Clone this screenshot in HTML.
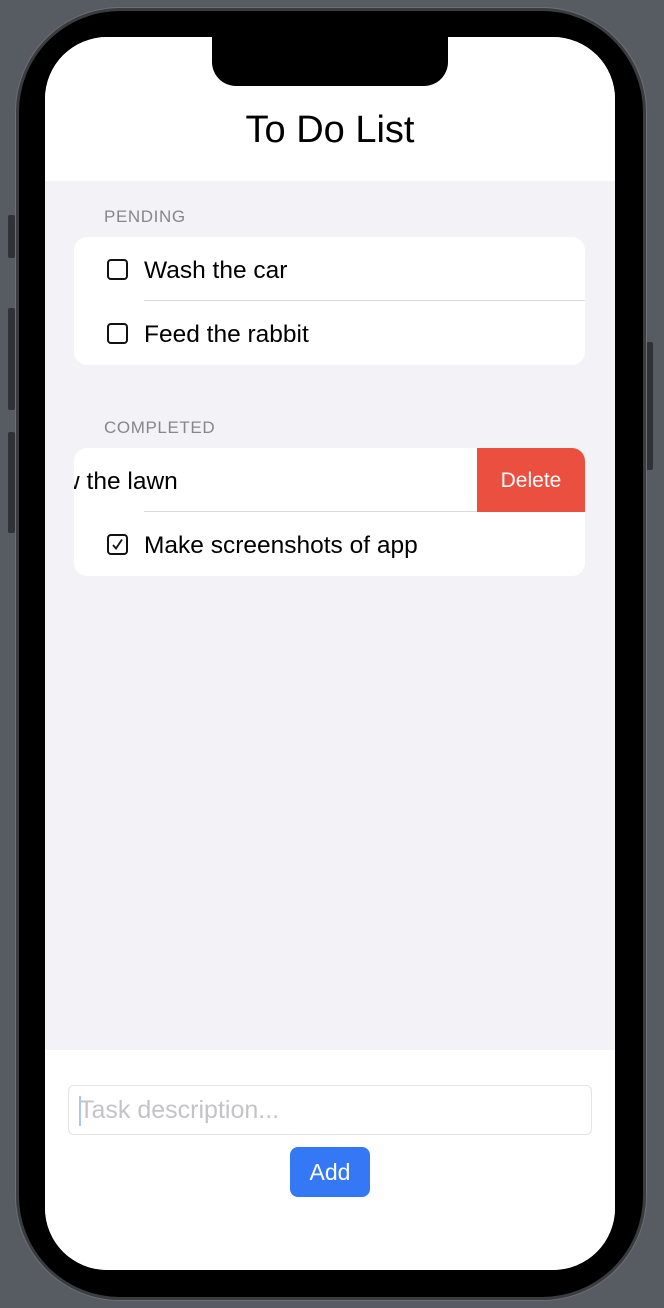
<!DOCTYPE html>
<html><head><meta charset="utf-8"><style>
*{margin:0;padding:0;box-sizing:border-box}
body{width:664px;height:1308px;background:#575c63;position:relative;overflow:hidden;font-family:"Liberation Sans",sans-serif}
.btn{position:absolute;background:#2f3236;border-radius:2px}
.phone{position:absolute;left:16px;top:8px;width:630px;height:1292px;border-radius:104px;background:#000;border:3px solid #3a3c40;box-shadow:0 0 0 1px #6c6f74}
.screen{position:absolute;left:45px;top:37px;width:570px;height:1233px;border-radius:62px;background:#f2f2f7;overflow:hidden}
.notch{position:absolute;left:167px;top:0;width:236px;height:49px;background:#000;border-radius:0 0 24px 24px}
.top{position:absolute;left:0;top:0;width:570px;height:144px;background:#fff}
.title{position:absolute;top:72px;width:570px;text-align:center;font-size:38px;color:#000}
.hdr{position:absolute;left:59px;font-size:17px;color:#86868b;letter-spacing:.6px}
.card{position:absolute;left:29px;width:511px;background:#fff;border-radius:13px;overflow:hidden}
.row{position:absolute;left:0;height:64px;width:511px;font-size:24.5px;color:#000;line-height:67px}
.row .t{position:absolute;left:70px}
.cb{position:absolute;left:33px;top:22px;width:21px;height:21px;border:2px solid #111;border-radius:4px}
.sep{position:absolute;left:70px;right:0;height:1px;background:#d9d9de}
.bottom{position:absolute;left:0;top:1013px;width:570px;height:220px;background:#fff}
.input{position:absolute;left:23px;top:35px;width:524px;height:50px;border:1px solid #e4e4e8;border-radius:6px;font-size:25px;color:#c4c4c8;line-height:48px;padding-left:10px}
.caret{position:absolute;left:10px;top:10px;width:2px;height:30px;background:#a9c8f5}
.add{position:absolute;left:245px;top:97px;width:80px;height:50px;background:#3478f6;border-radius:8px;color:#fff;font-size:23px;text-align:center;line-height:50px}
</style></head><body>
<div class="btn" style="left:8px;top:215px;width:7px;height:43px"></div>
<div class="btn" style="left:8px;top:308px;width:7px;height:102px"></div>
<div class="btn" style="left:8px;top:432px;width:7px;height:101px"></div>
<div class="btn" style="left:646px;top:342px;width:7px;height:128px"></div>
<div class="phone"></div>
<div class="screen">
 <div class="top"><div class="title">To Do List</div></div>
 <div class="hdr" style="top:170px">PENDING</div>
 <div class="card" style="top:200px;height:128px">
  <div class="row" style="top:0"><div class="cb"></div><span class="t">Wash the car</span></div>
  <div class="sep" style="top:63px"></div>
  <div class="row" style="top:64px"><div class="cb"></div><span class="t">Feed the rabbit</span></div>
 </div>
 <div class="hdr" style="top:381px">COMPLETED</div>
 <div class="card" style="top:411px;height:128px">
  <div class="row" style="top:0"><span class="t" style="left:-46px">Mow the lawn</span></div>
  <div style="position:absolute;left:403px;top:0;width:108px;height:64px;background:#eb4f3f;color:#fff;font-size:21px;text-align:center;line-height:66px">Delete</div>
  <div class="sep" style="top:63px;right:108px"></div>
  <div class="row" style="top:64px"><div class="cb"><svg width="17" height="17" viewBox="0 0 17 17" style="position:absolute;left:0;top:0"><path d="M4 9 L7 12.5 L13 3.5" stroke="#111" stroke-width="1.8" fill="none"/></svg></div><span class="t">Make screenshots of app</span></div>
 </div>
 <div class="bottom">
  <div class="input"><div class="caret"></div>Task description...</div>
  <div class="add">Add</div>
 </div>
 <div class="notch"></div>
</div>
</body></html>
